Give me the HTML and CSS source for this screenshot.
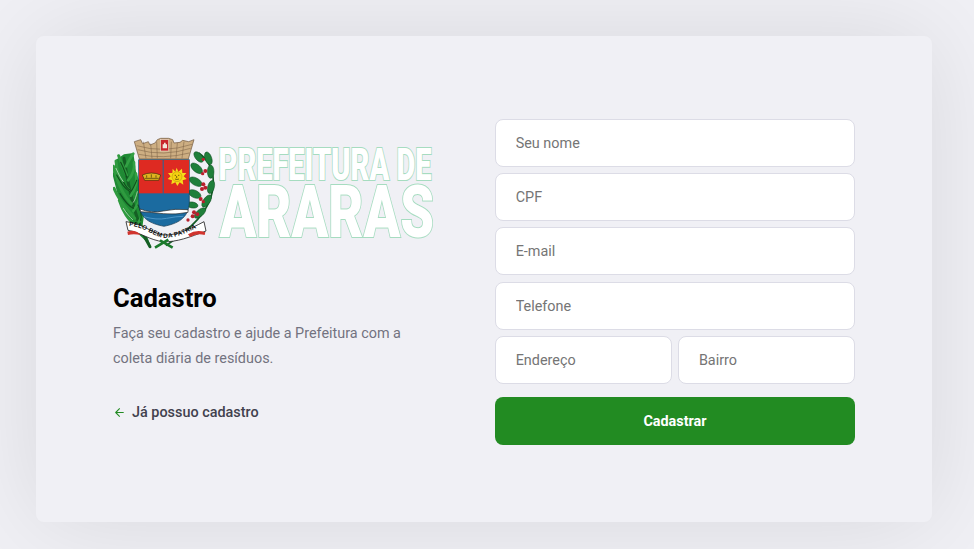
FILE: index.html
```html
<!DOCTYPE html>
<html lang="pt-BR">
<head>
<meta charset="utf-8">
<title>Cadastro</title>
<link rel="stylesheet" href="styles.css">
</head>
<body>
<main class="card">
  <section class="intro">
    <svg class="logo" viewBox="113 135 322 120" role="img" aria-label="Prefeitura de Araras">
      <g transform="translate(100 125) scale(.33333)">
        <!-- sugar cane -->
        <path d="M72 88 L100 84 L108 140 L124 186 L137 232 L128 300 L152 362 L110 322 L62 244 L38 150 L48 104 Z" fill="#1f8a34"/>
        <g fill="none" stroke-linecap="round">
          <path d="M150 365 C110 300 88 210 72 100" stroke-width="9" stroke="#155f24"/>
          <path d="M112 310 C90 285 72 270 58 226M104 280 C84 255 60 235 42 190M94 236 C72 214 54 180 40 124M88 196 C66 176 50 146 48 108M80 150 C70 126 62 112 56 92" stroke-width="9" stroke="#2f9a3f"/>
          <path d="M110 300 C126 278 132 262 134 232M100 258 C118 234 124 210 120 186M92 212 C108 190 112 170 108 146M84 166 C98 150 104 128 102 112M78 124 C86 108 92 96 100 86" stroke-width="8" stroke="#33a044"/>
          <path d="M50 150 C66 178 74 190 90 200M60 206 C76 232 86 244 100 250M114 240 C124 258 126 270 122 286M62 112 C72 130 74 140 80 156M110 166 C104 180 100 190 94 198M70 170 C78 186 84 192 92 196" stroke-width="3.5" stroke="#0f4f1c"/>
          <path d="M48 130 C56 148 62 160 70 170M70 250 C80 266 90 276 98 284M112 200 C108 214 106 224 100 232" stroke-width="2" stroke="#d8ecd8"/>
        </g>
        <!-- coffee branch -->
        <path d="M198 362 C260 320 340 260 340 170 C340 130 320 100 296 84" fill="none" stroke="#145c26" stroke-width="5"/>
        <g fill="#1f7f3a" stroke="#0d4a1f" stroke-width="1.5">
          <ellipse cx="296" cy="96" rx="19" ry="10" transform="rotate(50 296 96)"/>
          <ellipse cx="325" cy="100" rx="20" ry="10" transform="rotate(70 325 100)"/>
          <ellipse cx="290" cy="130" rx="21" ry="11" transform="rotate(40 290 130)"/>
          <ellipse cx="332" cy="140" rx="20" ry="10" transform="rotate(90 332 140)"/>
          <ellipse cx="287" cy="170" rx="21" ry="11" transform="rotate(30 287 170)"/>
          <ellipse cx="333" cy="186" rx="20" ry="10" transform="rotate(105 333 186)"/>
          <ellipse cx="284" cy="207" rx="20" ry="11" transform="rotate(25 284 207)"/>
          <ellipse cx="320" cy="228" rx="21" ry="10" transform="rotate(125 320 228)"/>
          <ellipse cx="277" cy="240" rx="17" ry="9" transform="rotate(10 277 240)"/>
          <ellipse cx="300" cy="264" rx="21" ry="10" transform="rotate(140 300 264)"/>
        </g>
        <g fill="#b8202c">
          <circle cx="310" cy="103" r="5"/><circle cx="316" cy="138" r="6"/><circle cx="308" cy="146" r="5"/>
          <circle cx="310" cy="178" r="6"/><circle cx="316" cy="188" r="6"/><circle cx="306" cy="192" r="6"/>
          <circle cx="302" cy="222" r="6"/><circle cx="310" cy="230" r="5"/><circle cx="282" cy="262" r="6"/>
          <circle cx="292" cy="268" r="6"/><circle cx="278" cy="274" r="6"/><circle cx="264" cy="285" r="5"/>
        </g>
        <!-- wall crown -->
        <path d="M103 50 L122 44 L128 56 L145 50 L150 60 L165 54 L172 44 L182 40 L206 40 L218 44 L222 54 L240 52 L248 46 L266 50 L282 44 L265 102 L118 102 Z" fill="#cdae82" stroke="#6b5238" stroke-width="2"/>
        <path d="M110 62 Q190 86 276 58M113 74 Q190 96 272 70M116 88 Q190 104 268 84M130 50 L138 100M152 56 L156 100M170 50 L172 100M214 50 L212 100M232 54 L228 100M252 50 L246 100" fill="none" stroke="#7b6044" stroke-width="1.6"/>
        <rect x="182" y="44" width="24" height="34" fill="#c8262c" stroke="#e8dcc8" stroke-width="2"/>
        <path d="M188 70 V58 H192 V53 H197 V58 H201 V70 Z" fill="#f2e8dc"/>
        <!-- shield -->
        <path d="M116 104 H268 V232 C266 282 230 296 192 304 C152 296 118 282 116 232 Z" fill="#1b6ba0" stroke="#173a52" stroke-width="2"/>
        <rect x="117" y="105" width="71" height="100" fill="#de2a22"/>
        <rect x="191" y="105" width="76" height="100" fill="#de2a22"/>
        <path d="M120 252 Q155 266 190 258 T264 254 V262 Q228 270 190 266 T122 260 Z" fill="#fff" stroke="#222" stroke-width="2"/>
        <path d="M132 275 Q170 286 200 280 T250 274" fill="none" stroke="#4c96c7" stroke-width="3"/>
        <!-- crown -->
        <path d="M127 150 Q154 138 182 150 L176 166 H134 Z" fill="#e0b320" stroke="#3c2d08" stroke-width="2"/>
        <path d="M134 160 H176M140 151 V158M154 148 V158M168 151 V158" stroke="#3c2d08" stroke-width="2" fill="none"/>
        <!-- sun -->
        <path d="M230 128 L235 140 L246 131 L247 144 L259 144 L251 154 L260 162 L248 166 L250 179 L239 172 L232 183 L226 172 L214 178 L216 166 L203 162 L212 154 L204 144 L217 144 L218 131 L226 140 Z" fill="#f7dc1a"/>
        <circle cx="231" cy="155" r="15" fill="#f4d00f" stroke="#8b6d0a" stroke-width="1"/>
        <path d="M224 151 h4M234 151 h4M230 153 v6M225 162 q6 3 12 0" stroke="#3a2a06" stroke-width="2" fill="none"/>
        <!-- ribbon -->
        <path d="M78 290 C130 296 150 322 190 330 C230 332 270 312 312 290 L318 318 C270 336 230 352 190 350 C150 346 120 322 84 316 Z" fill="#fff" stroke="#222" stroke-width="2.5"/>
        <path d="M82 320 Q105 312 122 330 Q100 326 84 330 Z M264 328 Q290 312 316 322 L314 330 Q290 324 270 336 Z" fill="#d1342e"/>
        <path id="ribbon-line" d="M86 302 C135 306 155 332 192 339 C232 339 270 318 308 300" fill="none"/>
        <text class="motto"><textPath href="#ribbon-line" startOffset="1">PELO BEM DA PATRIA</textPath></text>
        <!-- crossed stems -->
        <path d="M165 368 L205 344 M218 368 L180 346" stroke="#1c7a2c" stroke-width="8" fill="none"/>
      </g>
      <text class="logo-text logo-small" transform="translate(218.5 179.5) scale(1 1.54)">PREFEITURA DE</text>
      <text class="logo-text logo-big" transform="translate(219.5 236.5) scale(1 1.35)">ARARAS</text>
    </svg>
    <h1 class="title">Cadastro</h1>
    <p class="lead">Faça seu cadastro e ajude a Prefeitura com a coleta diária de resíduos.</p>
    <a class="back" href="#">
      <svg class="back-icon" viewBox="0 0 24 24" aria-hidden="true"><path d="M19 12H5M12 19l-7-7 7-7"/></svg>
      Já possuo cadastro
    </a>
  </section>
  <form class="form">
    <input class="field" placeholder="Seu nome">
    <input class="field" placeholder="CPF">
    <input class="field" placeholder="E-mail">
    <input class="field" placeholder="Telefone">
    <div class="pair">
      <input class="field" placeholder="Endereço">
      <input class="field" placeholder="Bairro">
    </div>
    <button class="submit" type="button">Cadastrar</button>
  </form>
</main>
</body>
</html>
```
FILE: styles.css
```css
* { box-sizing: border-box; }
html, body { height: 100%; }
body {
  margin: 0;
  background: #f0f0f5;
  font-family: Roboto, "Liberation Sans", sans-serif;
  overflow: hidden;
}
.card {
  width: 896px;
  height: 486px;
  margin: 36px 0 0 36px;
  padding: 82.6px 77px 0;
  background: #f0f0f5;
  border-radius: 8px;
  box-shadow: 0 0 100px rgba(0, 0, 0, .1);
  display: flex;
  justify-content: space-between;
  align-items: flex-start;
}
.intro {
  width: 322px;
  padding-top: 16.4px;
  display: flex;
  flex-direction: column;
  align-items: flex-start;
}
.logo {
  display: block;
  width: 322px;
  height: 120px;
}
.logo-text {
  font-family: Roboto, "Liberation Sans", sans-serif;
  font-weight: 900;
  fill: #fff;
  stroke: #a6dcc0;
  stroke-width: 1.8px;
  paint-order: stroke;
  vector-effect: non-scaling-stroke;
}
.logo-small { font-size: 29px; }
.logo-big { font-size: 54px; }
.motto {
  font-family: "Liberation Sans", sans-serif;
  font-weight: 700;
  font-size: 19px;
  letter-spacing: .6px;
  fill: #111;
}
.title {
  margin: 28px 0 0;
  font-size: 25.6px;
  line-height: 30px;
  font-weight: 700;
  color: #000;
}
.lead {
  margin: 8px 0 0;
  font-size: 14.4px;
  line-height: 25px;
  color: #737380;
}
.back {
  margin-top: 33px;
  display: flex;
  align-items: center;
  gap: 6px;
  font-size: 14.4px;
  line-height: 17px;
  font-weight: 500;
  color: #41414d;
  text-decoration: none;
}
.back-icon {
  width: 13px;
  height: 13px;
  fill: none;
  stroke: #228b22;
  stroke-width: 2;
  stroke-linecap: round;
  stroke-linejoin: round;
}
.form {
  width: 360px;
  display: flex;
  flex-direction: column;
  gap: 6.4px;
}
.pair {
  display: flex;
  gap: 6.4px;
}
.pair .field { flex: 1; min-width: 0; }
.field {
  display: block;
  width: 100%;
  height: 48px;
  padding: 1.2px 19.7px 0;
  background: #fff;
  border: 1px solid #dcdce6;
  border-radius: 8px;
  font-family: Roboto, sans-serif;
  font-size: 14.4px;
  color: #41414d;
  outline: none;
}
.field::placeholder { color: #757575; opacity: 1; }
.submit {
  width: 100%;
  height: 48px;
  margin-top: 6.4px;
  padding-top: 1.2px;
  background: #228b22;
  border: 0;
  border-radius: 8px;
  font-family: Roboto, sans-serif;
  font-size: 14.4px;
  font-weight: 700;
  color: #fff;
}
```
